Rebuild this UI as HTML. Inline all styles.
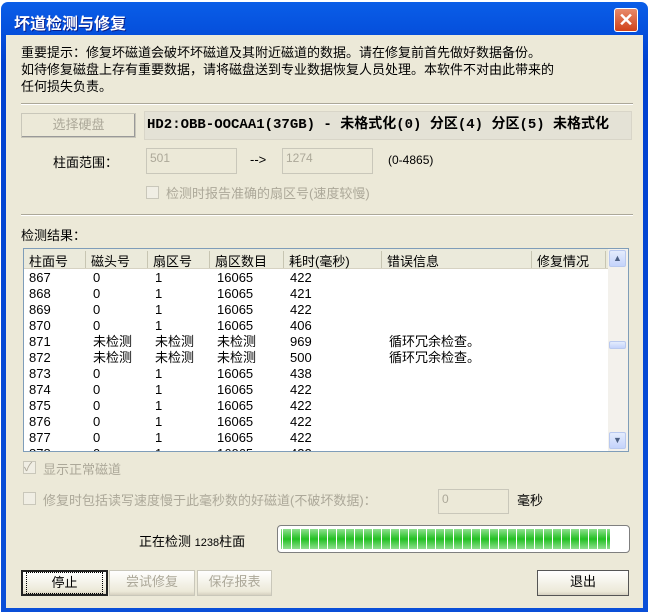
<!DOCTYPE html><html><head><meta charset="utf-8"><style>
*{margin:0;padding:0;box-sizing:border-box}
body{width:650px;height:614px;background:#fff;position:relative;overflow:hidden;font-family:"Liberation Sans","Noto Sans CJK SC","WenQuanYi Zen Hei",sans-serif;font-size:13px;color:#000}
.win{position:absolute;left:1px;top:2px;width:647px;height:610px;background:linear-gradient(#0a5ee8,#0041d0 10%,#0a4fd8);border-radius:7px 7px 0 0}
.title{position:absolute;left:13px;top:8px;color:#fff;font-weight:bold;font-size:16px;text-shadow:1px 1px #0a1f8a}
.close{position:absolute;left:613px;top:6px;width:24px;height:24px;border:1px solid #fff;border-radius:3px;background:linear-gradient(#e88a6a,#d0421a);color:#fff;font-weight:bold;font-size:18px;text-align:center;line-height:22px}
.body{position:absolute;left:5px;top:33px;width:637px;height:573px;background:#ECE9D8}
.a{position:absolute;white-space:nowrap}
.sep{position:absolute;left:15px;width:612px;height:2px;border-top:1px solid #aca899;border-bottom:1px solid #fff}
.btn{position:absolute;border:1px solid #003c74;border-radius:0;background:linear-gradient(#fff,#ece9d8 85%,#d6d0c0);text-align:center;line-height:22px}
.dis{color:#aca899;border-color:#c9c7ba}
.inp{position:absolute;background:#ECE9D8;border:1px solid #c9c7ba;color:#aca899;font-size:12px;padding:2px 3px}
.cb{position:absolute;width:13px;height:13px;border:1px solid #c9c7ba;background:#f0eee4}
.list{position:absolute;left:17px;top:213px;width:606px;height:204px;border:1px solid #7f9db9;background:#fff;overflow:hidden}
.hdr{position:absolute;left:0;top:0;height:20px;width:584px;background:#ebeadb;border-bottom:1px solid #d6d2c2}
.hdr span{position:absolute;top:2px;height:17px;border-right:1px solid #c7c5b2;padding-left:5px}
.row{position:absolute;left:0;height:16px;width:584px;font-size:13px;line-height:16px}
.row span{position:absolute;top:0;line-height:16px}
.sb{position:absolute;right:0;top:0;width:20px;height:202px;background:#f3f1ec}
.sbb{position:absolute;left:1px;width:17px;height:17px;border:1px solid #b9c9ef;border-radius:2px;background:linear-gradient(#e4ecfd,#c4d3fb);color:#4d6185;font-size:9px;text-align:center;line-height:15px}
</style></head><body>
<div class="win">
<div class="title">坏道检测与修复</div>
<div class="close">✕</div>
<div class="body">
<div class="a" style="left:15px;top:9px;line-height:17px">重要提示：修复坏磁道会破坏坏磁道及其附近磁道的数据。请在修复前首先做好数据备份。<br>如待修复磁盘上存有重要数据，请将磁盘送到专业数据恢复人员处理。本软件不对由此带来的<br>任何损失负责。</div>
<div class="sep" style="top:68px"></div>
<div class="btn dis" style="left:15px;top:78px;width:115px;height:25px;border-color:#c9c7ba;background:#ECE9D8;box-shadow:inset -1px -1px #999">选择硬盘</div>
<div class="a" style="left:138px;top:76px;width:488px;height:29px;background:#e4e2d6;border:1px solid #d8d5c8;font-weight:bold;font-family:'Liberation Mono','Noto Sans CJK SC',monospace;font-size:14px;line-height:27px;padding-left:2px;overflow:hidden">HD2:OBB-OOCAA1(37GB) - 未格式化(0) 分区(4) 分区(5) 未格式化</div>
<div class="a" style="left:47px;top:117px">柱面范围：</div>
<div class="inp" style="left:140px;top:113px;width:91px;height:26px">501</div>
<div class="a" style="left:244px;top:117px">--&gt;</div>
<div class="inp" style="left:276px;top:113px;width:91px;height:26px">1274</div>
<div class="a" style="left:382px;top:118px;font-size:12px">(0-4865)</div>
<div class="cb" style="left:140px;top:151px"></div>
<div class="a" style="left:160px;top:148px;color:#aca899">检测时报告准确的扇区号(速度较慢)</div>
<div class="sep" style="top:179px"></div>
<div class="a" style="left:15px;top:190px">检测结果：</div>
<div class="list">
<div class="hdr"><span style="left:0;width:62px">柱面号</span><span style="left:62px;width:62px">磁头号</span><span style="left:124px;width:62px">扇区号</span><span style="left:186px;width:74px">扇区数目</span><span style="left:260px;width:98px">耗时(毫秒)</span><span style="left:358px;width:150px">错误信息</span><span style="left:508px;width:74px">修复情况</span></div>
<div class="row" style="top:21px"><span style="left:5px">867</span><span style="left:69px">0</span><span style="left:131px">1</span><span style="left:193px">16065</span><span style="left:266px">422</span></div>
<div class="row" style="top:37px"><span style="left:5px">868</span><span style="left:69px">0</span><span style="left:131px">1</span><span style="left:193px">16065</span><span style="left:266px">421</span></div>
<div class="row" style="top:53px"><span style="left:5px">869</span><span style="left:69px">0</span><span style="left:131px">1</span><span style="left:193px">16065</span><span style="left:266px">422</span></div>
<div class="row" style="top:69px"><span style="left:5px">870</span><span style="left:69px">0</span><span style="left:131px">1</span><span style="left:193px">16065</span><span style="left:266px">406</span></div>
<div class="row" style="top:85px"><span style="left:5px">871</span><span style="left:69px">未检测</span><span style="left:131px">未检测</span><span style="left:193px">未检测</span><span style="left:266px">969</span><span style="left:365px">循环冗余检查。</span></div>
<div class="row" style="top:101px"><span style="left:5px">872</span><span style="left:69px">未检测</span><span style="left:131px">未检测</span><span style="left:193px">未检测</span><span style="left:266px">500</span><span style="left:365px">循环冗余检查。</span></div>
<div class="row" style="top:117px"><span style="left:5px">873</span><span style="left:69px">0</span><span style="left:131px">1</span><span style="left:193px">16065</span><span style="left:266px">438</span></div>
<div class="row" style="top:133px"><span style="left:5px">874</span><span style="left:69px">0</span><span style="left:131px">1</span><span style="left:193px">16065</span><span style="left:266px">422</span></div>
<div class="row" style="top:149px"><span style="left:5px">875</span><span style="left:69px">0</span><span style="left:131px">1</span><span style="left:193px">16065</span><span style="left:266px">422</span></div>
<div class="row" style="top:165px"><span style="left:5px">876</span><span style="left:69px">0</span><span style="left:131px">1</span><span style="left:193px">16065</span><span style="left:266px">422</span></div>
<div class="row" style="top:181px"><span style="left:5px">877</span><span style="left:69px">0</span><span style="left:131px">1</span><span style="left:193px">16065</span><span style="left:266px">422</span></div>
<div class="row" style="top:197px"><span style="left:5px">878</span><span style="left:69px">0</span><span style="left:131px">1</span><span style="left:193px">16065</span><span style="left:266px">422</span></div>
<div class="sb"><div class="sbb" style="top:1px">▲</div><div class="sbb" style="top:92px;height:8px"></div><div class="sbb" style="top:183px">▼</div></div>
</div>
<div class="cb" style="left:17px;top:426px"></div><div class="a" style="left:18px;top:423px;color:#aca899;font-size:12px">✓</div>
<div class="a" style="left:37px;top:424px;color:#aca899">显示正常磁道</div>
<div class="cb" style="left:17px;top:457px"></div>
<div class="a" style="left:37px;top:455px;color:#aca899">修复时包括读写速度慢于此毫秒数的好磁道(不破坏数据)：</div>
<div class="inp" style="left:432px;top:454px;width:71px;height:25px">0</div>
<div class="a" style="left:511px;top:455px">毫秒</div>
<div class="a" style="left:133px;top:496px">正在检测 <span style="font-size:11px">1238</span>柱面</div>
<div class="a" style="left:271px;top:490px;width:353px;height:28px;border:1px solid #7f7f7f;border-radius:4px;background:#fff;padding:3px"><div style="width:329px;height:20px;background:repeating-linear-gradient(90deg,transparent 0 1px,#fff 1px 2px,transparent 2px 9px),linear-gradient(#8fe08f,#22c022 50%,#8fe08f)"></div></div>
<div class="btn" style="left:15px;top:535px;width:87px;height:26px;border:2px solid #222;line-height:20px"><span style="display:inline-block;border:1px dotted #000;width:77px">停止</span></div>
<div class="btn dis" style="left:103px;top:535px;width:86px;height:26px">尝试修复</div>
<div class="btn dis" style="left:191px;top:535px;width:75px;height:26px">保存报表</div>
<div class="btn" style="left:531px;top:535px;width:92px;height:26px;border-color:#555">退出</div>
</div></div>
</body></html>
